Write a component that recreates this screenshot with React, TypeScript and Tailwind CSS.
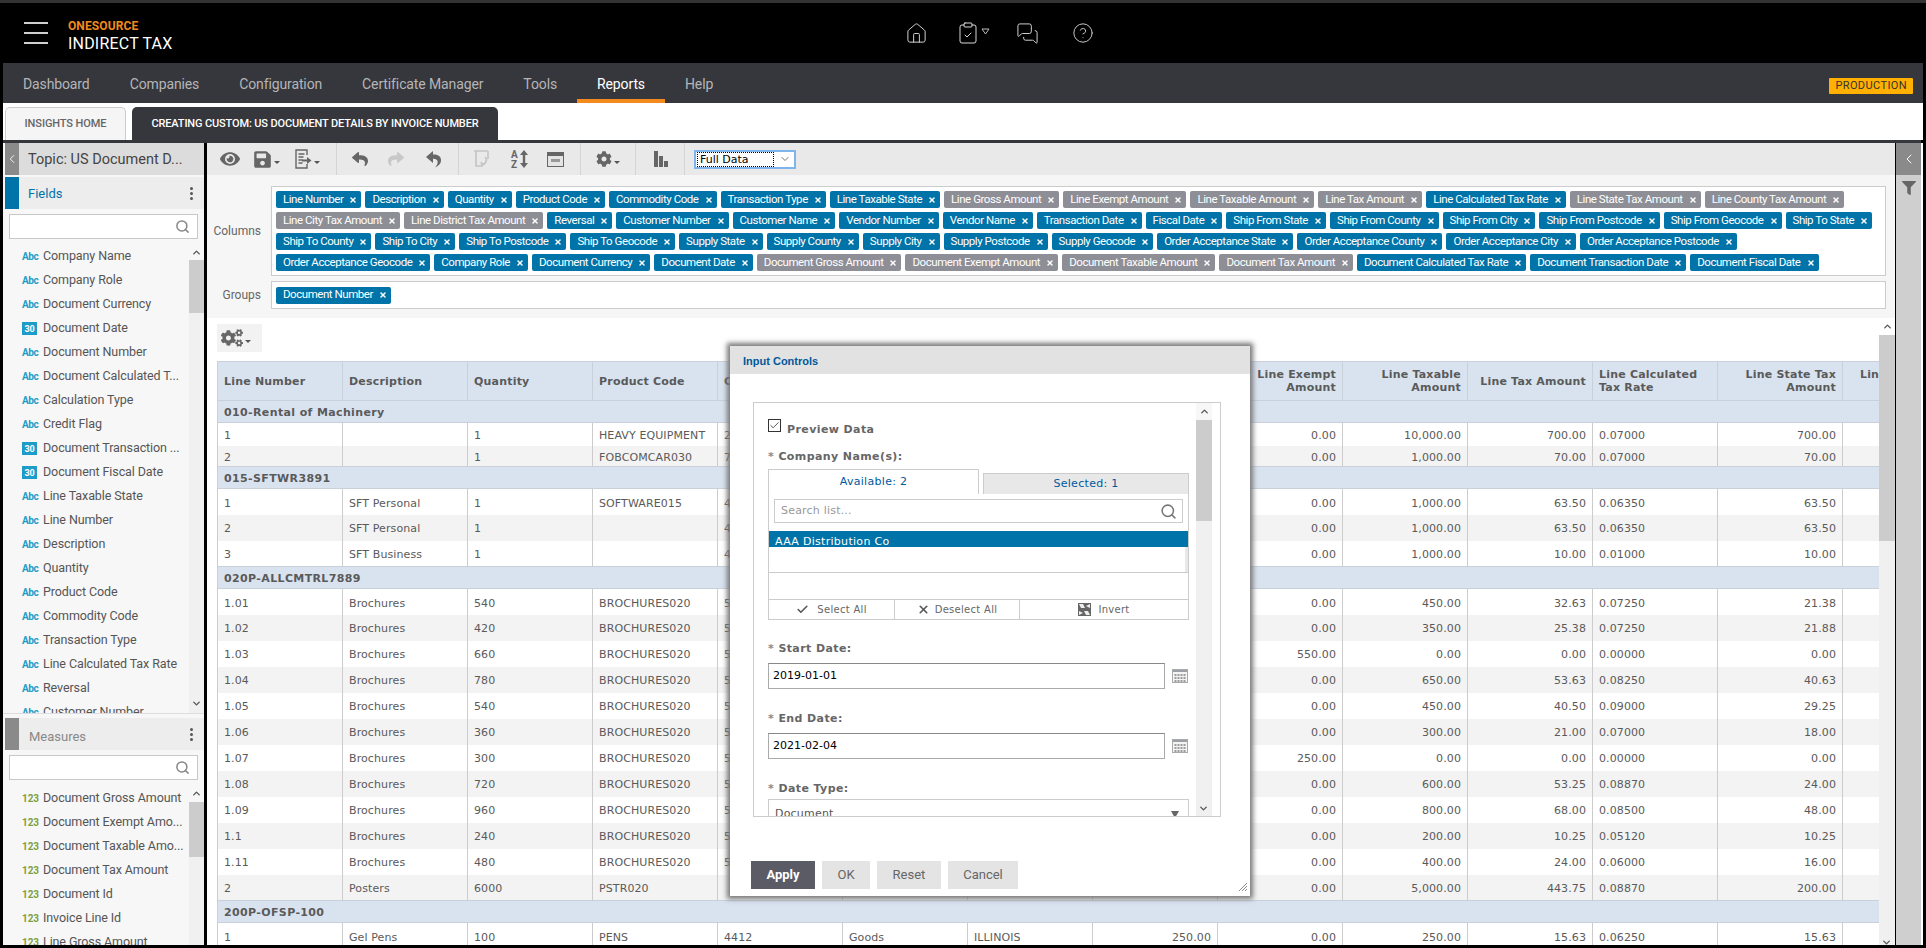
import React from 'react';
import { ChevronDown, ChevronLeft, ChevronUp, CircleHelp, ClipboardCheck, House, MessagesSquare, Search, X, Check } from 'lucide-react';
import { FaCog, FaCogs, FaEye, FaFilter, FaReply, FaSave, FaShare } from 'react-icons/fa';

type Chip = { t: string; g?: boolean };
const c = (t: string): Chip => ({ t });
const g = (t: string): Chip => ({ t, g: true });

const chipRows: Chip[][] = [
  [c('Line Number'), c('Description'), c('Quantity'), c('Product Code'), c('Commodity Code'), c('Transaction Type'), c('Line Taxable State'), g('Line Gross Amount'), g('Line Exempt Amount'), g('Line Taxable Amount'), g('Line Tax Amount'), c('Line Calculated Tax Rate'), g('Line State Tax Amount'), g('Line County Tax Amount')],
  [g('Line City Tax Amount'), g('Line District Tax Amount'), c('Reversal'), c('Customer Number'), c('Customer Name'), c('Vendor Number'), c('Vendor Name'), c('Transaction Date'), c('Fiscal Date'), c('Ship From State'), c('Ship From County'), c('Ship From City'), c('Ship From Postcode'), c('Ship From Geocode'), c('Ship To State')],
  [c('Ship To County'), c('Ship To City'), c('Ship To Postcode'), c('Ship To Geocode'), c('Supply State'), c('Supply County'), c('Supply City'), c('Supply Postcode'), c('Supply Geocode'), c('Order Acceptance State'), c('Order Acceptance County'), c('Order Acceptance City'), c('Order Acceptance Postcode')],
  [c('Order Acceptance Geocode'), c('Company Role'), c('Document Currency'), c('Document Date'), g('Document Gross Amount'), g('Document Exempt Amount'), g('Document Taxable Amount'), g('Document Tax Amount'), c('Document Calculated Tax Rate'), c('Document Transaction Date'), c('Document Fiscal Date')],
];

const fields: [string, 'a' | 'd'][] = [
  ['Company Name', 'a'], ['Company Role', 'a'], ['Document Currency', 'a'], ['Document Date', 'd'], ['Document Number', 'a'],
  ['Document Calculated T...', 'a'], ['Calculation Type', 'a'], ['Credit Flag', 'a'], ['Document Transaction ...', 'd'], ['Document Fiscal Date', 'd'],
  ['Line Taxable State', 'a'], ['Line Number', 'a'], ['Description', 'a'], ['Quantity', 'a'], ['Product Code', 'a'],
  ['Commodity Code', 'a'], ['Transaction Type', 'a'], ['Line Calculated Tax Rate', 'a'], ['Reversal', 'a'], ['Customer Number', 'a'],
];

const measures = ['Document Gross Amount', 'Document Exempt Amo...', 'Document Taxable Amo...', 'Document Tax Amount', 'Document Id', 'Invoice Line Id', 'Line Gross Amount'];

const headers: [string, string][] = [
  ['Line Number', 'l'], ['Description', 'l'], ['Quantity', 'l'], ['Product Code', 'l'], ['Commodity Code', 'l'], ['Transaction Type', 'l'], ['Line Taxable State', 'l'],
  ['Line Gross Amount', 'r'], ['Line Exempt Amount', 'r'], ['Line Taxable Amount', 'r'], ['Line Tax Amount', 'r'], ['Line Calculated Tax Rate', 'l'], ['Line State Tax Amount', 'r'], ['Line County Tax Amount', 'r'],
];

type Row = string[];
const B = 'Brochures';
const BC = 'BROCHURES020';
const groups: { name: string; h: string; rows: Row[] }[] = [
  {
    name: '010-Rental of Machinery', h: 'short',
    rows: [
      ['1', '', '1', 'HEAVY EQUIPMENT', '2', '', '', '', '0.00', '10,000.00', '700.00', '0.07000', '700.00'],
      ['2', '', '1', 'FOBCOMCAR030', '7', '', '', '', '0.00', '1,000.00', '70.00', '0.07000', '70.00'],
    ],
  },
  {
    name: '015-SFTWR3891', h: 'tall',
    rows: [
      ['1', 'SFT Personal', '1', 'SOFTWARE015', '4', '', '', '', '0.00', '1,000.00', '63.50', '0.06350', '63.50'],
      ['2', 'SFT Personal', '1', '', '4', '', '', '', '0.00', '1,000.00', '63.50', '0.06350', '63.50'],
      ['3', 'SFT Business', '1', '', '4', '', '', '', '0.00', '1,000.00', '10.00', '0.01000', '10.00'],
    ],
  },
  {
    name: '020P-ALLCMTRL7889', h: 'tall',
    rows: [
      ['1.01', B, '540', BC, '5', '', '', '', '0.00', '450.00', '32.63', '0.07250', '21.38'],
      ['1.02', B, '420', BC, '5', '', '', '', '0.00', '350.00', '25.38', '0.07250', '21.88'],
      ['1.03', B, '660', BC, '5', '', '', '', '550.00', '0.00', '0.00', '0.00000', '0.00'],
      ['1.04', B, '780', BC, '5', '', '', '', '0.00', '650.00', '53.63', '0.08250', '40.63'],
      ['1.05', B, '540', BC, '5', '', '', '', '0.00', '450.00', '40.50', '0.09000', '29.25'],
      ['1.06', B, '360', BC, '5', '', '', '', '0.00', '300.00', '21.00', '0.07000', '18.00'],
      ['1.07', B, '300', BC, '5', '', '', '', '250.00', '0.00', '0.00', '0.00000', '0.00'],
      ['1.08', B, '720', BC, '5', '', '', '', '0.00', '600.00', '53.25', '0.08870', '24.00'],
      ['1.09', B, '960', BC, '5', '', '', '', '0.00', '800.00', '68.00', '0.08500', '48.00'],
      ['1.1', B, '240', BC, '5', '', '', '', '0.00', '200.00', '10.25', '0.05120', '10.25'],
      ['1.11', B, '480', BC, '5', '', '', '', '0.00', '400.00', '24.00', '0.06000', '16.00'],
      ['2', 'Posters', '6000', 'PSTR020', '', '', '', '', '0.00', '5,000.00', '443.75', '0.08870', '200.00'],
    ],
  },
  {
    name: '200P-OFSP-100', h: 'tall',
    rows: [['1', 'Gel Pens', '100', 'PENS', '4412', 'Goods', 'ILLINOIS', '250.00', '0.00', '250.00', '15.63', '0.06250', '15.63']],
  },
];

const rightCols = [7, 8, 9, 10, 12];

const Caret = () => <span className="ml-[2px] mt-[7px] w-0 h-0 border-l-[3px] border-r-[3px] border-t-[3px] border-l-transparent border-r-transparent border-t-[#555]" />;

const ChipTag = ({ chip }: { chip: Chip }) => (
  <span className={`h-[17px] pl-[7px] pr-[4px] rounded-[2px] flex items-center gap-[6px] text-white text-[11.5px] tracking-[-0.45px] whitespace-nowrap ${chip.g ? 'bg-[#8d8e96]' : 'bg-[#0073a8]'}`}>
    {chip.t}
    <X size={8} strokeWidth={4.5} className="text-white" />
  </span>
);

const SideIcon = ({ kind }: { kind: 'a' | 'd' | 'n' }) => {
  if (kind === 'a') return <span className="w-[21px] shrink-0 text-[10px] font-bold text-[#1e9cc9] tracking-[-0.4px]">Abc</span>;
  if (kind === 'n') return <span className="w-[21px] shrink-0 text-[10px] font-bold text-[#7f9f3f]">123</span>;
  return (
    <span className="w-[15px] h-[13px] mr-[6px] shrink-0 bg-[#1e9cc9] border-t-[3px] border-[#1e9cc9] flex items-center justify-center text-[9px] leading-none font-bold text-white">30</span>
  );
};

const SearchBox = () => (
  <div className="mx-[6px] h-[25px] bg-white border border-[#c8c8c8] flex items-center justify-end pr-[7px]">
    <Search size={15} strokeWidth={2.4} className="text-[#888]" />
  </div>
);

const ScrollBar = ({ thumb, top }: { thumb: string; top: string }) => (
  <div className="w-[15px] shrink-0 flex flex-col bg-[#f0f0f0] relative">
    <div className={`flex items-center justify-center bg-[#f7f7f7] ${top}`}><ChevronUp size={11} strokeWidth={3} className="text-[#555]" /></div>
    <div className={`bg-[#cccccc] ${thumb}`} />
  </div>
);

const Sep = () => <span className="w-[1px] h-[32px] bg-[#d4d4d4]" />;

const DateField = ({ label, value, top }: { label: string; value: string; top: string }) => (
  <>
    <div className={`h-[14px] text-[11px] font-bold text-[#666] leading-[14px] tracking-[0.4px] ${top}`}><span className="text-[#888]">* </span>{label}</div>
    <div className="mt-[7px] flex items-center">
      <div className="w-[397px] h-[26px] border border-[#aaa] border-t-[#888] pl-[4px] flex items-center text-[11px] text-black">{value}</div>
      <svg width="16" height="14" viewBox="0 0 16 14" className="ml-[7px]">
        <rect x="0.5" y="0.5" width="15" height="13" fill="#f4f4f4" stroke="#aaa" />
        <rect x="1" y="1" width="14" height="2" fill="#9aa0a6" />
        {[2.5, 5.5, 8.5, 11.5].map((x) => [5, 8, 11].map((y) => <rect key={`${x}-${y}`} x={x} y={y} width="2" height="2" fill="#9c9c9c" />))}
      </svg>
    </div>
  </>
);

export default function App() {
  return (
    <div className="w-[1926px] h-[948px] overflow-hidden relative flex flex-col bg-black font-['Roboto',sans-serif] text-[#555]">
      <div className="h-[3px] bg-[#333333] shrink-0" />

      {/* Top bar */}
      <header className="h-[60px] shrink-0 bg-black flex items-center ml-[3px] relative">
        <div className="ml-[21px] w-[24px] flex flex-col gap-[8px]">
          <span className="h-[2px] bg-[#d0d0d0]" />
          <span className="h-[2px] bg-[#d0d0d0]" />
          <span className="h-[2px] bg-[#d0d0d0]" />
        </div>
        <div className="ml-[20px] mt-[7px] flex flex-col">
          <span className="text-[12px] leading-[14px] font-bold text-[#f28a1e] tracking-[0.1px]">ONESOURCE</span>
          <span className="text-[16px] leading-[22px] text-white tracking-[0.2px]">INDIRECT TAX</span>
        </div>
        <div className="ml-[733px] flex items-center text-[#d8d8d8]">
          <House size={23} strokeWidth={1} />
          <ClipboardCheck size={24} strokeWidth={1} className="ml-[28px]" />
          <svg width="9" height="7" viewBox="0 0 9 7" className="ml-[1px] mb-[3px]" fill="none" stroke="#bbb"><path d="M1 1h7L4.5 6z" /></svg>
          <MessagesSquare size={23} strokeWidth={1} className="ml-[26px]" />
          <CircleHelp size={22} strokeWidth={1} className="ml-[33px]" />
        </div>
      </header>

      {/* Nav */}
      <nav className="h-[40px] shrink-0 bg-[#36373c] ml-[3px] mr-[3px] flex items-stretch text-[14px] tracking-[-0.12px] text-[#b5b5b8]">
        {['Dashboard', 'Companies', 'Configuration', 'Certificate Manager', 'Tools'].map((n) => (
          <span key={n} className="px-[20px] pt-[11px]">{n}</span>
        ))}
        <span className="px-[20px] pt-[11px] text-white border-b-[4px] border-[#f28a1e]">Reports</span>
        <span className="px-[20px] pt-[11px]">Help</span>
        <span className="ml-auto mr-[10px] mt-[15px] h-[16px] px-[6px] bg-[#ffb000] rounded-[1px] text-[#333] text-[11px] leading-[16px] tracking-[0.4px]">PRODUCTION</span>
      </nav>

      {/* Tabs */}
      <div className="h-[37px] shrink-0 bg-white ml-[3px] mr-[3px] flex items-end pl-[2px] gap-[6px]">
        <span className="h-[33px] w-[121px] pt-[1px] flex items-center justify-center bg-[#f5f5f5] border border-b-0 border-[#ccc] rounded-t-[5px] text-[11px] font-medium tracking-[-0.1px] text-[#666]">INSIGHTS HOME</span>
        <span className="h-[33px] w-[366px] pt-[1px] flex items-center justify-center bg-[#36373c] rounded-t-[5px] text-[11px] font-medium tracking-[-0.14px] text-white">CREATING CUSTOM: US DOCUMENT DETAILS BY INVOICE NUMBER</span>
      </div>
      <div className="h-[3px] shrink-0 bg-[#36373c] ml-[3px] mr-[5px]" />

      {/* Body */}
      <div className="flex-1 min-h-0 flex ml-[3px] mr-[3px] mb-[3px] bg-white">
        {/* Left sidebar */}
        <aside className="w-[204px] shrink-0 bg-[#f7f7f7] border-r-[3px] border-black flex flex-col overflow-hidden">
          <div className="h-[32px] shrink-0 flex bg-[#dcdcdc] ml-[2px]">
            <span className="w-[14px] bg-[#8a8a8a] flex items-center justify-center"><ChevronLeft size={14} strokeWidth={1.5} className="text-white" /></span>
            <span className="ml-[9px] pt-[1px] self-center text-[14.5px] text-[#444]">Topic: US Document D...</span>
          </div>
          <div className="h-[32px] mt-[2px] shrink-0 flex bg-[#ededed] ml-[2px] items-center">
            <span className="w-[14px] h-full bg-[#0073a8]" />
            <span className="ml-[9px] pt-[2px] text-[13px] text-[#0073a8]">Fields</span>
            <span className="ml-auto mr-[11px] flex flex-col gap-[2px]">
              <i className="w-[3px] h-[3px] rounded-full bg-[#555]" /><i className="w-[3px] h-[3px] rounded-full bg-[#555]" /><i className="w-[3px] h-[3px] rounded-full bg-[#555]" />
            </span>
          </div>
          <div className="mt-[5px] shrink-0"><SearchBox /></div>
          <div className="h-[470px] mt-[5px] shrink-0 flex overflow-hidden border-b border-[#ddd] relative">
            <div className="flex-1 pl-[19px]">
              {fields.map(([t, k]) => (
                <div key={t} className="h-[24px] flex items-center text-[12.5px] tracking-[-0.1px] text-[#555] whitespace-nowrap"><SideIcon kind={k} />{t}</div>
              ))}
            </div>
            <ScrollBar thumb="h-[53px]" top="h-[16px]" />
            <ChevronDown size={11} strokeWidth={3} className="absolute right-[2px] bottom-[4px] text-[#555]" />
          </div>
          <div className="h-[32px] mt-[4px] shrink-0 flex bg-[#ededed] ml-[2px] items-center">
            <span className="w-[14px] h-full bg-[#8a8a8a]" />
            <span className="ml-[10px] pt-[5px] text-[13px] text-[#888]">Measures</span>
            <span className="ml-auto mr-[11px] flex flex-col gap-[2px]">
              <i className="w-[3px] h-[3px] rounded-full bg-[#555]" /><i className="w-[3px] h-[3px] rounded-full bg-[#555]" /><i className="w-[3px] h-[3px] rounded-full bg-[#555]" />
            </span>
          </div>
          <div className="mt-[5px] shrink-0"><SearchBox /></div>
          <div className="flex-1 min-h-0 mt-[4px] flex overflow-hidden">
            <div className="flex-1 pl-[19px] pt-[2px]">
              {measures.map((t) => (
                <div key={t} className="h-[24px] flex items-center text-[12.5px] tracking-[-0.1px] text-[#555] whitespace-nowrap"><SideIcon kind="n" />{t}</div>
              ))}
            </div>
            <ScrollBar thumb="h-[55px]" top="h-[18px]" />
          </div>
        </aside>

        {/* Main */}
        <main className="flex-1 min-w-0 flex flex-col">
          {/* Toolbar */}
          <div className="h-[32px] shrink-0 bg-[#e9e9e9] flex items-center text-[#555]">
            <div className="w-[129px] flex items-center pl-[13px]">
              <FaEye size={20} className="text-[#666]" />
              <FaSave size={19} className="ml-[13px] text-[#666]" /><Caret />
              <svg width="18" height="20" viewBox="0 0 18 20" className="ml-[14px]" fill="none" stroke="#666" strokeWidth="1.4"><path d="M13 6V1H2v18h11v-4" /><path d="M4.5 5h6M4.5 8h5M4.5 11h4M4.5 14h4" /><path d="M8 10.5h5V8l4.5 3.5L13 15v-2.5H8z" fill="#666" stroke="none" /></svg><Caret />
            </div>
            <Sep />
            <div className="w-[121px] flex items-center pl-[15px]">
              <FaReply size={16} className="text-[#666]" />
              <FaShare size={16} className="ml-[20px] text-[#c8c8c8]" />
              <svg width="17" height="18" viewBox="0 0 17 18" fill="#666" className="ml-[21px]"><path d="M1 7 8 1v3.6c5-.4 8.5 2 8 6.4-.3 2.8-2.6 5-6 6.5 1.8-2 3-3.800 2.600-6-.3-1.900-2.300-2.900-4.600-2.700V13z" /></svg>
            </div>
            <Sep />
            <div className="w-[121px] flex items-center pl-[14px]">
              <svg width="18" height="20" viewBox="0 0 18 20" fill="none" stroke="#c4c4c4" strokeWidth="1.6"><path d="M1 2h14M3 2v15h7M15 2v8" /><path d="M12 8a4 4 0 0 1-3 7M8 13l1 3 3-1" /></svg>
              <svg width="18" height="20" viewBox="0 0 18 20" className="ml-[20px]" fill="#666">
                <text x="0" y="9" fontSize="10" fontWeight="700" fontFamily="Roboto, sans-serif">A</text>
                <text x="0" y="19" fontSize="10" fontWeight="700" fontFamily="Roboto, sans-serif">Z</text>
                <path d="M13 1l4 5h-2.800v8H17l-4 5-4-5h2.800V6H9z" />
              </svg>
              <svg width="17" height="15" viewBox="0 0 17 15" className="ml-[18px]"><rect x="0.5" y="0.5" width="16" height="14" fill="#e4e4e4" stroke="#666" /><rect x="1" y="1" width="15" height="3" fill="#666" /><rect x="4" y="7" width="9" height="3" fill="#999" /></svg>
            </div>
            <Sep />
            <div className="w-[54px] flex items-center pl-[15px]">
              <FaCog size={16} className="text-[#666]" /><Caret />
            </div>
            <Sep />
            <div className="w-[48px] flex items-center pl-[18px]">
              <svg width="14" height="16" viewBox="0 0 14 16" fill="#666"><rect x="0" y="0" width="4" height="16" /><rect x="5" y="5" width="4" height="11" /><rect x="10" y="10" width="4" height="6" /></svg>
            </div>
            <Sep />
            <div className="ml-[9px] w-[102px] h-[19px] bg-white border-2 border-[#7db5ec] flex items-center text-[12px] font-['DejaVu_Sans',sans-serif] text-black">
              <span className="w-[77px] h-[15px] ml-[1px] border border-dotted border-black pl-[2px] leading-[13px] text-[11px]">Full Data</span>
              <ChevronDown size={12} strokeWidth={1.4} className="ml-[5px] text-[#333]" />
            </div>
          </div>

          {/* Columns and groups */}
          <div className="h-[143px] shrink-0 bg-[#f6f6f6] pt-[11px] text-[#666] text-[12px]">
            <div className="flex items-center">
              <span className="w-[64px] pr-[10px] text-right">Columns</span>
              <div className="w-[1615px] h-[90px] bg-white border border-[#ccc] pl-[4px] pt-[4px] flex flex-col gap-[4px]">
                {chipRows.map((row, i) => (
                  <div key={i} className="flex gap-[4px]">
                    {row.map((chip) => <ChipTag key={chip.t} chip={chip} />)}
                  </div>
                ))}
              </div>
            </div>
            <div className="mt-[5px] flex items-center">
              <span className="w-[64px] pr-[10px] text-right">Groups</span>
              <div className="w-[1615px] h-[28px] bg-white border border-[#ccc] pl-[4px] flex items-center">
                <ChipTag chip={{ t: 'Document Number' }} />
              </div>
            </div>
          </div>

          {/* Table */}
          <div className="flex-1 min-h-0 flex bg-white">
            <div className="flex-1 min-w-0 overflow-hidden pl-[10px] font-['DejaVu_Sans',sans-serif]">
              <div className="mt-[6px] w-[45px] h-[28px] bg-[#f2f2f2] flex items-center pl-[4px]">
                <FaCogs size={22} className="text-[#666]" /><Caret />
              </div>
              <table className="mt-[9px] table-fixed w-[1750px] border-collapse text-[11px] text-[#5a5a5a] tracking-[0.1px]">
                <colgroup>{headers.map(([h]) => <col key={h} className="w-[125px]" />)}</colgroup>
                <thead>
                  <tr className="h-[39px] bg-[#d9e3f0]">
                    {headers.map(([h, a]) => (
                      <th key={h} className={`border border-[#c8d0da] px-[6px] font-bold leading-[13px] tracking-[0.2px] ${a === 'r' ? 'text-right' : 'text-left'}`}>{h}</th>
                    ))}
                  </tr>
                </thead>
                <tbody>
                  {groups.map((gr) => (
                    <React.Fragment key={gr.name}>
                      <tr className="h-[22px] bg-[#d9e3f0]">
                        <td colSpan={14} className="border border-[#c8d0da] px-[6px] pt-[3px] font-bold tracking-[0.37px]">{gr.name}</td>
                      </tr>
                      {gr.rows.map((r, i) => (
                        <tr key={i} className={`${gr.h === 'short' ? (i === 0 ? 'h-[23px]' : 'h-[21px]') : 'h-[26px]'} ${i % 2 ? 'bg-[#f3f3f3]' : 'bg-white'}`}>
                          {[...r, ''].map((v, j) => (
                            <td key={j} className={`border-x border-[#ccc] px-[6px] pt-[4px] whitespace-nowrap overflow-hidden ${rightCols.includes(j) ? 'text-right' : 'text-left'}`}>{v}</td>
                          ))}
                        </tr>
                      ))}
                    </React.Fragment>
                  ))}
                </tbody>
              </table>
            </div>
            <div className="w-[16px] shrink-0 flex flex-col relative bg-[#f0f0f0]">
              <div className="h-[17px] bg-white flex items-center justify-center"><ChevronUp size={11} strokeWidth={3} className="text-[#555]" /></div>
              <div className="h-[206px] bg-[#cccccc]" />
              <ChevronDown size={11} strokeWidth={3} className="absolute left-[2px] bottom-[-3px] text-[#555]" />
            </div>
          </div>
        </main>

        {/* Right rail */}
        <aside className="w-[26px] shrink-0 bg-[#cfcfcf] border-l-[1px] border-black mr-[2px] flex flex-col items-center">
          <span className="h-[32px] w-full bg-[#8a8a8a] flex items-center justify-center"><ChevronLeft size={16} strokeWidth={1.5} className="text-white" /></span>
          <FaFilter size={14} className="mt-[6px] text-[#666]" />
        </aside>
      </div>

      {/* Input Controls dialog */}
      <div className="absolute left-[730px] top-[346px] w-[520px] h-[550px] bg-white shadow-[0_0_5px_3px_#777] font-['DejaVu_Sans',sans-serif]">
        <div className="h-[28px] bg-[#e2e2e2] pl-[13px] pt-[2px] flex items-center font-['Liberation_Sans',sans-serif] text-[11px] font-bold text-[#00599c]">Input Controls</div>
        <div className="mt-[28px] ml-[23px] w-[468px] h-[415px] border border-[#ccc] overflow-hidden flex">
          <div className="w-[442px] shrink-0 pl-[14px] pt-[16px]">
            <div className="flex">
              <span className="w-[13px] h-[13px] border border-[#333] flex items-center justify-center"><Check size={11} strokeWidth={1.8} className="text-[#333]" /></span>
              <span className="ml-[6px] mt-[4px] text-[11px] font-bold text-[#666] leading-[14px] tracking-[0.4px]">Preview Data</span>
            </div>
            <div className="mt-[13px] h-[14px] text-[11px] font-bold text-[#666] leading-[14px] tracking-[0.4px]"><span className="text-[#888]">* </span>Company Name(s):</div>

            <div className="mt-[5px] w-[421px] h-[25px] flex items-end text-[11px] tracking-[0.3px] text-[#00599c]">
              <span className="w-[211px] h-[25px] border border-b-0 border-[#ccc] flex items-center justify-center">Available: 2</span>
              <span className="ml-[4px] w-[206px] h-[21px] border border-b-0 border-[#ccc] bg-[#e8e8e8] flex items-center justify-center">Selected: 1</span>
            </div>
            <div className="w-[421px] h-[126px] border border-t-0 border-[#ccc] flex flex-col">
              <div className="mt-[5px] mx-[5px] h-[24px] border border-[#ccc] flex items-center justify-between pl-[6px] pr-[5px] text-[11px] tracking-[0.2px] text-[#999]">
                Search list...
                <Search size={17} strokeWidth={2.2} className="text-[#777]" />
              </div>
              <div className="mt-[8px] h-[16px] bg-[#0073a8] text-white text-[11px] tracking-[0.3px] leading-[22px] pl-[6px] overflow-hidden">AAA Distribution Co</div>
              <div className="h-[26px] flex justify-end border-b border-[#ccc]">
                <span className="w-[3px] h-full bg-[#e8e8e8]" />
              </div>
              <div className="h-[26px]" />
              <div className="flex-1 border-t border-[#ccc] flex text-[10px] text-[#666] tracking-[0.3px]">
                <span className="w-[126px] flex items-center justify-center gap-[8px] border-r border-[#ccc]"><Check size={13} strokeWidth={3} className="text-[#555]" />Select All</span>
                <span className="w-[125px] flex items-center justify-center gap-[5px] border-r border-[#ccc]"><X size={13} strokeWidth={3} className="text-[#555]" />Deselect All</span>
                <span className="flex-1 flex items-center justify-center gap-[7px]">
                  <svg width="13" height="13" viewBox="0 0 13 13"><rect width="13" height="13" fill="#666" /><path d="M1 1h4l2 4-4 0zM12 12H8L6 8h4zM12 1v4L8 3zM1 12V8l4 2z" fill="#eee" /></svg>
                  Invert
                </span>
              </div>
            </div>

            <DateField label="Start Date:" value="2019-01-01" top="mt-[22px]" />
            <DateField label="End Date:" value="2021-02-04" top="mt-[23px]" />
            <div className="mt-[23px] h-[14px] text-[11px] font-bold text-[#666] leading-[14px] tracking-[0.4px]"><span className="text-[#888]">* </span>Date Type:</div>
            <div className="mt-[3px] w-[421px] h-[28px] border border-[#ccc] pl-[6px] pr-[9px] pt-[6px] flex justify-between text-[11px] tracking-[0.2px] text-[#555]">
              Document
              <span className="mt-[5px] w-0 h-0 border-l-[4px] border-r-[4px] border-t-[7px] border-l-transparent border-r-transparent border-t-[#666]" />
            </div>
          </div>
          <div className="w-[16px] shrink-0 bg-[#f0f0f0] flex flex-col relative">
            <div className="h-[17px] bg-[#f7f7f7] flex items-center justify-center"><ChevronUp size={11} strokeWidth={3} className="text-[#555]" /></div>
            <div className="h-[101px] bg-[#cccccc]" />
            <ChevronDown size={11} strokeWidth={3} className="absolute left-[2px] bottom-[2px] text-[#555]" />
          </div>
        </div>
        <div className="mt-[44px] ml-[21px] flex gap-[7px] font-['Roboto',sans-serif] text-[13px]">
          <span className="w-[64px] h-[28px] bg-[#5b5b66] text-white font-bold flex items-center justify-center">Apply</span>
          <span className="w-[48px] h-[28px] bg-[#e4e4e4] text-[#666] flex items-center justify-center">OK</span>
          <span className="w-[64px] h-[28px] bg-[#e4e4e4] text-[#666] flex items-center justify-center">Reset</span>
          <span className="w-[70px] h-[28px] bg-[#e4e4e4] text-[#666] flex items-center justify-center">Cancel</span>
        </div>
        <svg width="10" height="10" viewBox="0 0 10 10" className="absolute right-[2px] bottom-[4px]" stroke="#888" strokeWidth="1"><path d="M1 9 9 1M4 9l5-5M7 9l2-2" /></svg>
      </div>
    </div>
  );
}
